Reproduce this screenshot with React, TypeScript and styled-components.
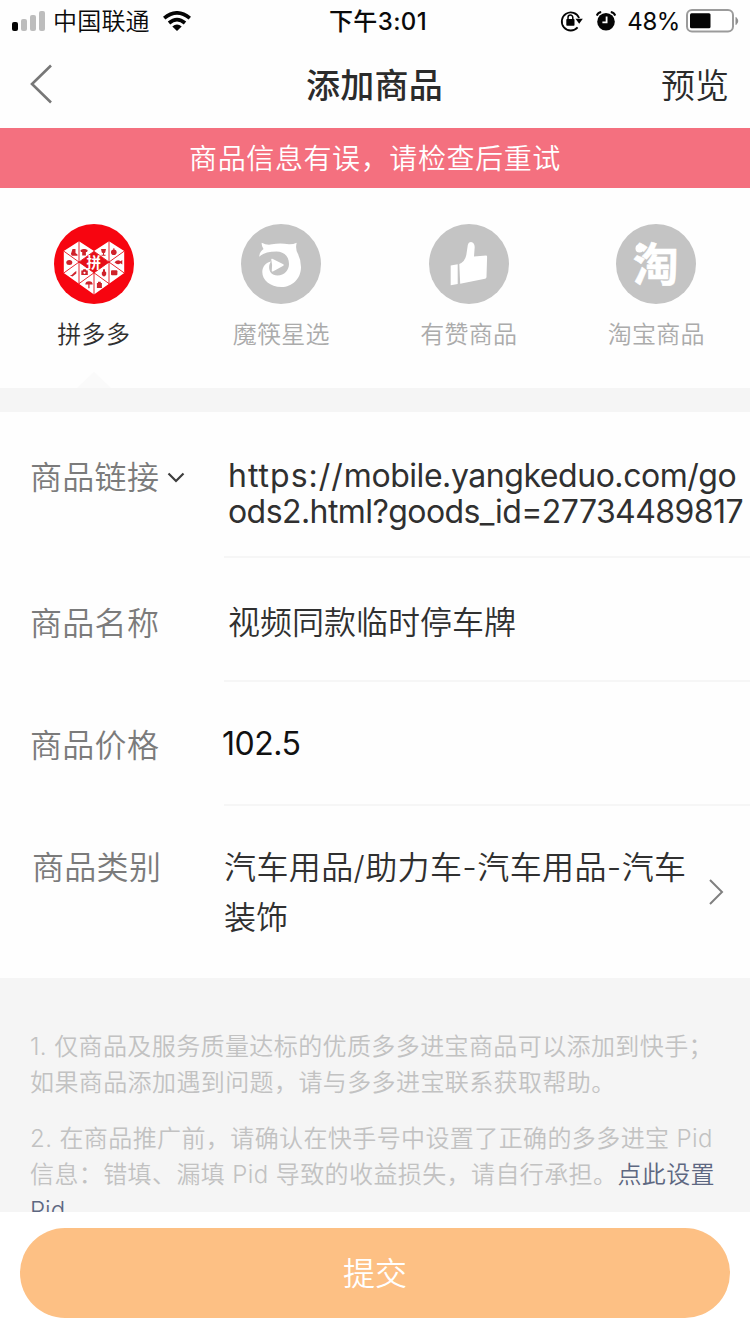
import React from 'react';
import styled, { createGlobalStyle } from 'styled-components';

const Global = createGlobalStyle`
  * { box-sizing: border-box; }
  body {
    margin: 0;
    background: #fff;
    font-family: Inter, 'Noto Sans CJK SC', sans-serif;
    font-weight: 350;
  }
  svg { display: block; flex: none; }
`;

const Screen = styled.div`
  width: 750px;
  height: 1334px;
  display: flex;
  flex-direction: column;
  overflow: hidden;
  background: #fefefe;
`;

const StatusBar = styled.div`
  height: 40px;
  flex: none;
  display: grid;
  grid-template-columns: 1fr auto 1fr;
  align-items: center;
  padding: 0 10px 0 12px;
  color: #0a0a0a;
  font-size: 24px;
  line-height: 38px;
`;

const StatusSide = styled.div<{ $end?: boolean }>`
  display: flex;
  align-items: center;
  justify-content: ${p => (p.$end ? 'flex-end' : 'flex-start')};
`;

const Carrier = styled.span`
  margin: 0 13px 0 7px;
  padding-top: 3px;
  letter-spacing: 0.2px;
`;

const Clock = styled.span`
  font-weight: 500;
  letter-spacing: 0.4px;
  padding: 3px 0 0 4px;
`;

const Percent = styled.span`
  margin: 0 6px 0 11px;
  padding-top: 3px;
  font-size: 24px;
  font-weight: 400;
  letter-spacing: -0.4px;
`;

const NavBar = styled.div`
  height: 88px;
  flex: none;
  display: grid;
  grid-template-columns: 1fr auto 1fr;
  align-items: center;
  padding: 0 21px 0 29px;
  color: #2b2b2b;
  font-size: 34px;
  line-height: 84px;
`;

const Title = styled.h1`
  margin: 0;
  padding: 4px 9px 0 0;
  font-size: 34px;
  font-weight: 500;
  letter-spacing: 0.3px;
`;

const Preview = styled.span`
  padding-top: 4px;
  text-align: right;
`;

const ErrorBanner = styled.div`
  height: 60px;
  flex: none;
  padding-top: 2px;
  background: #f4707f;
  color: #fff;
  font-size: 28px;
  line-height: 59px;
  letter-spacing: 0.6px;
  text-align: center;
`;

const Tabs = styled.div`
  height: 200px;
  flex: none;
  display: flex;
  padding-top: 36px;
`;

const Tab = styled.div<{ $active?: boolean }>`
  flex: 1;
  display: flex;
  flex-direction: column;
  align-items: center;
  color: ${p => (p.$active ? '#2f2f2f' : '#ababab')};
  font-size: 24px;
  line-height: 36px;
  letter-spacing: 0.3px;
`;

const TabLabel = styled.span`
  margin-top: 13px;
`;

const Pointer = styled.div`
  margin-top: 19px;
  border: 17px solid transparent;
  border-top-width: 0;
  border-bottom: 16px solid #fafafa;
`;

const Divider = styled.div`
  height: 24px;
  flex: none;
  background: #f5f5f5;
`;

const Row = styled.div<{ $h: number; $top: number }>`
  height: ${p => p.$h}px;
  flex: none;
  display: flex;
  padding: ${p => p.$top}px 0 0 30px;
`;

const Label = styled.div<{ $indent?: number }>`
  width: 194px;
  flex: none;
  display: flex;
  align-items: center;
  align-self: flex-start;
  gap: 8px;
  padding: 2px 0 0 ${p => p.$indent ?? 0}px;
  color: #7b7b7b;
  font-size: 32px;
  line-height: 48px;
  letter-spacing: 0.3px;
`;

const Field = styled.div<{ $line?: boolean; $top: number; $left?: number }>`
  flex: 1;
  align-self: stretch;
  margin-top: -${p => p.$top}px;
  padding: ${p => p.$top}px 0 0 ${p => p.$left ?? 0}px;
  border-bottom: ${p => (p.$line ? '2px solid #f6f6f6' : 'none')};
  display: flex;
  color: #303030;
  font-size: 32px;
  line-height: 50px;
  white-space: nowrap;
`;

const Url = styled.div`
  font-size: 32px;
  line-height: 36px;
  font-weight: 400;
  padding-top: 6px;
`;

const Line = styled.span<{ $track?: number }>`
  display: block;
  white-space: nowrap;
  letter-spacing: ${p => p.$track ?? 0}px;
`;

const Scheme = styled.span`
  letter-spacing: 1px;
`;

const Price = styled.span`
  margin: -1px 0 0 -2px;
  font-weight: 400;
  color: #111;
  letter-spacing: -0.5px;
`;

const Category = styled.div`
  flex: 1;
  padding-top: 1px;
`;

const Arrow = styled.div`
  padding: 36px 26px 0 0;
`;

const Notes = styled.div`
  height: 234px;
  flex: none;
  overflow: hidden;
  background: #f5f5f5;
  padding: 51px 30px 0;
  color: #c2c2c2;
  font-size: 24px;
  line-height: 36px;
`;

const Note = styled.p`
  margin: 0 0 20px;
`;

const Link = styled.span`
  color: #5d6781;
`;

const Footer = styled.div`
  flex: 1;
  background: #fff;
  padding: 16px 20px;
`;

const Submit = styled.button`
  display: block;
  width: 100%;
  height: 90px;
  border: 0;
  border-radius: 45px;
  background: #fdc084;
  color: #fff;
  font-family: inherit;
  font-weight: inherit;
  font-size: 32px;
  line-height: 88px;
  padding: 2px 0 0;
`;

const Signal = () => (
  <svg width="34" height="20" viewBox="0 0 34 20">
    <rect x="0" y="11" width="6" height="9" rx="2" fill="#050505" />
    <rect x="9" y="8" width="6" height="12" rx="2" fill="#bdbdbd" />
    <rect x="18" y="4" width="6" height="16" rx="2" fill="#bdbdbd" />
    <rect x="27" y="0" width="6" height="20" rx="2" fill="#bdbdbd" />
  </svg>
);

const Wifi = () => (
  <svg width="28" height="20" viewBox="0 0 28 20">
    <g fill="none" stroke="#050505" strokeWidth="3.7">
      <path d="M1.2 7.2Q14 -3.4 26.8 7.2" />
      <path d="M6 12Q14 5.2 22 12" />
    </g>
    <path d="M9.3 15.6Q14 11.2 18.7 15.6L14 20Z" fill="#050505" />
  </svg>
);

const RotationLock = () => (
  <svg width="23" height="22" viewBox="0 0 23 22">
    <path d="M17.6 17.4A9 9 0 1 1 19.1 8" fill="none" stroke="#050505" strokeWidth="1.8" />
    <path d="M15.5 8.8H22.8L19.2 13.8Z" fill="#050505" />
    <rect x="6.3" y="9" width="8.2" height="6.8" rx="0.8" fill="#050505" />
    <path d="M8 9.5V7.5a2.4 2.4 0 0 1 4.8 0V9.5" fill="none" stroke="#050505" strokeWidth="1.5" />
  </svg>
);

const Alarm = () => (
  <svg width="20" height="20" viewBox="0 0 20 20">
    <circle cx="10" cy="10.7" r="8.8" fill="#050505" />
    <path d="M10.6 5.4V11.4H6.4" fill="none" stroke="#fff" strokeWidth="1.8" />
    <path d="M0.8 4.6Q1.7 1.6 5.2 1M19.2 4.6Q18.3 1.6 14.8 1" fill="none" stroke="#050505" strokeWidth="2" />
  </svg>
);

const Battery = () => (
  <svg width="54" height="24" viewBox="0 0 54 24">
    <rect x="1" y="1" width="46" height="21.5" rx="5" fill="#fff" stroke="#9b9b9b" strokeWidth="2" />
    <rect x="4" y="4.3" width="20.5" height="15" rx="1.5" fill="#050505" />
    <path d="M50 8.5Q53.5 12 50 15.5Z" fill="#8d8d8d" stroke="#8d8d8d" />
  </svg>
);

const Back = () => (
  <svg width="24" height="40" viewBox="0 0 24 40">
    <path d="M22 1.5L3 20L22 38.5" fill="none" stroke="#777" strokeWidth="2.6" />
  </svg>
);

const ChevronDown = () => (
  <svg width="18" height="12" viewBox="0 0 18 12">
    <path d="M1.5 1.5L9 9L16.5 1.5" fill="none" stroke="#3d3d3d" strokeWidth="2.2" />
  </svg>
);

const ChevronRight = () => (
  <svg width="16" height="28" viewBox="0 0 16 28">
    <path d="M2 2L14 14L2 26" fill="none" stroke="#808080" strokeWidth="2" />
  </svg>
);

const Pinduoduo = () => (
  <svg width="80" height="80" viewBox="0 0 80 80">
    <circle cx="40" cy="40" r="40" fill="#f70510" />
    <path d="M9.8 27L25 17.2L40 27L55 17.2L70.2 27V49L40 70.6L9.8 49Z" fill="#fff" />
    <path d="M25 38.2L40 27.5L55 38.2L40 48.8Z" fill="#e60f19" />
    <path
      d="M25 17V60M55 17V60M40 48.8V71M10 27.3L40 48.8L70 27.3M40 27.3L10 48.8M40 27.3L70 48.8M25 59.6L40 48.8L55 59.6"
      fill="none"
      stroke="#e60f19"
      strokeWidth="0.9"
    />
    <g fill="#cf222b">
      <path d="M18.5 25h3v4l2 1.6v1.2h-5.6l-1-1.7z" />
      <path d="M26.5 26l2.500-1h2.200l2.500 1-.6 2h-1.200v3.500h-3.700v-3.500h-1.300z" />
      <ellipse cx="15.300" cy="38.400" rx="3" ry="2.500" />
      <path d="M15.800 51.400c3-.2 3-2.700 6.500-4.500v2.500l-3.800 3z" />
      <path d="M27.300 46.500h1.300l.8-1.200h2.300l.8 1.200h1.300v4.600h-6.500z" />
      <path d="M31.300 60.600a3.700 3.400 0 0 1 7.400 0h-3.200v3.600h-1.200v-3.600z" />
      <path d="M47 25h5l-.8 3.400-1.200.8v1.500h1.500v1h-4v-1h1.500v-1.500l-1.200-.8z" />
      <circle cx="59.800" cy="28.300" r="2.800" />
      <path d="M59.300 24.300h1.100v2.500h-1.100z" />
      <path d="M60.500 38.300q3.200-3.600 6-1l1.800-1.300v4.600l-1.800-1.400q-2.800 2.700-6-.9z" />
      <path d="M49 45.300h2v2q1.900 1 1.200 3.200-.8 2-2.200 2t-2.200-2q-.6-2.200 1.200-3.200z" />
      <rect x="57" y="46.200" width="6.400" height="5" rx="1" />
      <path d="M42.900 59h1.100v-1.300h2.800v1.300h1.100v5h-5z" />
    </g>
    <circle cx="30.500" cy="48.800" r="1.100" fill="#fff" />
    <text x="40" y="43.600" textAnchor="middle" fontSize="14.500" fontWeight="700" fill="#fff" fontFamily="'Noto Sans CJK SC', sans-serif">
      拼
    </text>
  </svg>
);

const Mokuai = () => (
  <svg width="80" height="80" viewBox="0 0 80 80">
    <circle cx="40" cy="40" r="40" fill="#c4c4c4" />
    <path
      d="M20.700 18.700Q26 21.500 31 20.300Q39 18.500 48 20.300Q52 20.500 55.700 18.700Q54 25 57 30Q60 36 60 43C60 55 51 63 40.500 63C29 63 21.300 56 21.300 48C21.300 42.500 25 38.500 30 37.500C26.500 42 27.500 51.500 36.500 51.500C43.500 51.500 48 46 48 40C48 32 42.500 27.500 35.500 27.500C28 27.500 22 29 18.300 32.700C18.300 28.500 20.500 26.500 22.500 25Q20.300 22 20.700 18.700Z"
      fill="#fff"
    />
    <path d="M31 35.500L42 41L31.500 46.800Q32.500 41 31 35.500Z" fill="#fff" stroke="#fff" strokeWidth="1.500" strokeLinejoin="round" />
  </svg>
);

const Youzan = () => (
  <svg width="80" height="80" viewBox="0 0 80 80">
    <circle cx="40" cy="40" r="40" fill="#c4c4c4" />
    <path d="M21.700 41.500L28.700 40.200V60L21.700 61.300Z" fill="#fff" />
    <path
      d="M30.300 40Q36 37.500 37.300 31L38.800 21Q39.500 18 42 18Q45.500 18.500 45.700 23L45 32.500L57 31.500Q58.200 31.500 58.100 33L57.500 53Q57.400 54.500 56 54.800L31.200 59.700Z"
      fill="#fff"
    />
  </svg>
);

const Taobao = () => (
  <svg width="80" height="80" viewBox="0 0 80 80">
    <circle cx="40" cy="40" r="40" fill="#c4c4c4" />
    <text
      x="40"
      y="57"
      textAnchor="middle"
      fontSize="46"
      fontWeight="700"
      fill="#fff"
      stroke="#fff"
      strokeWidth="0.500"
      strokeLinejoin="round"
      fontFamily="'Noto Sans CJK SC', sans-serif"
    >
      淘
    </text>
    <circle cx="23.500" cy="24.500" r="4" fill="#fff" />
  </svg>
);

const StatusIcons = styled.div`
  display: flex;
  align-items: center;
  gap: 13px;
`;

const sources = [
  { name: '拼多多', Icon: Pinduoduo },
  { name: '魔筷星选', Icon: Mokuai },
  { name: '有赞商品', Icon: Youzan },
  { name: '淘宝商品', Icon: Taobao },
];

export default function App() {
  return (
    <Screen>
      <Global />
      <StatusBar>
        <StatusSide>
          <Signal />
          <Carrier>中国联通</Carrier>
          <Wifi />
        </StatusSide>
        <Clock>下午3:01</Clock>
        <StatusSide $end>
          <StatusIcons>
            <RotationLock />
            <Alarm />
          </StatusIcons>
          <Percent>48%</Percent>
          <Battery />
        </StatusSide>
      </StatusBar>
      <NavBar>
        <Back />
        <Title>添加商品</Title>
        <Preview>预览</Preview>
      </NavBar>
      <ErrorBanner>商品信息有误，请检查后重试</ErrorBanner>
      <Tabs>
        {sources.map(({ name, Icon }, i) => (
          <Tab key={name} $active={i === 0}>
            <Icon />
            <TabLabel>{name}</TabLabel>
            {i === 0 && <Pointer />}
          </Tab>
        ))}
      </Tabs>
      <Divider />
      <Row $h={146} $top={40}>
        <Label>
          商品链接
          <ChevronDown />
        </Label>
        <Field $line $top={40} $left={4}>
          <Url>
            <Line $track={-0.45}>
              <Scheme>https://</Scheme>mobile.yangkeduo.com/go
            </Line>
            <Line $track={-0.57}>ods2.html?goods_id=27734489817</Line>
          </Url>
        </Field>
      </Row>
      <Row $h={124} $top={40}>
        <Label>商品名称</Label>
        <Field $line $top={40} $left={4}>
          视频同款临时停车牌
        </Field>
      </Row>
      <Row $h={124} $top={38}>
        <Label>商品价格</Label>
        <Field $line $top={38}>
          <Price>102.5</Price>
        </Field>
      </Row>
      <Row $h={172} $top={36}>
        <Label $indent={2}>商品类别</Label>
        <Field $top={36}>
          <Category>
            <Line $track={0.4}>汽车用品/助力车-汽车用品-汽车</Line>
            <Line>装饰</Line>
          </Category>
          <Arrow>
            <ChevronRight />
          </Arrow>
        </Field>
      </Row>
      <Notes>
        <Note>
          <Line $track={0.4}>1. 仅商品及服务质量达标的优质多多进宝商品可以添加到快手；</Line>
          <Line $track={0.4}>如果商品添加遇到问题，请与多多进宝联系获取帮助。</Line>
        </Note>
        <Note>
          <Line $track={0.4}>2. 在商品推广前，请确认在快手号中设置了正确的多多进宝 Pid</Line>
          <Line $track={0.4}>
            信息：错填、漏填 Pid 导致的收益损失，请自行承担。<Link>点此设置</Link>
          </Line>
          <Line>
            <Link>Pid</Link>
          </Line>
        </Note>
      </Notes>
      <Footer>
        <Submit>提交</Submit>
      </Footer>
    </Screen>
  );
}
